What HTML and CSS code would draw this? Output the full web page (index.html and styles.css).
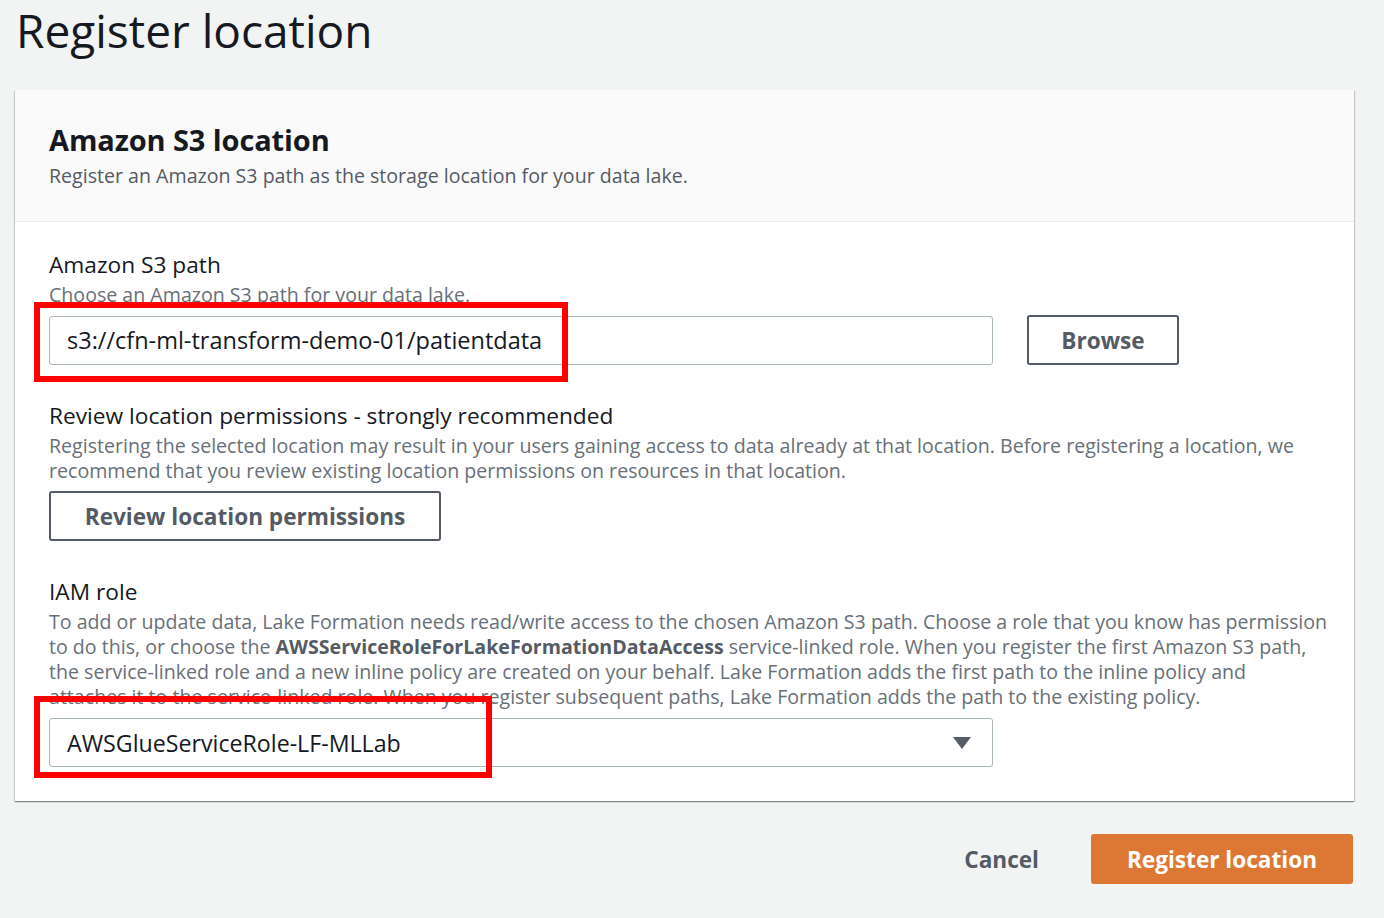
FILE: index.html
```html
<!DOCTYPE html>
<html lang="en">

<head>
  <meta charset="UTF-8" />
  <title>Register location</title>
  <link rel="stylesheet" href="styles.css">
</head>

<body>
  <div class="page">
    <h1>Register location</h1>

    <div class="panel">
      <div class="panel-header">
        <h2>Amazon S3 location</h2>
        <p class="sub">Register an Amazon S3 path as the storage location for your data lake.</p>
      </div>

      <div class="panel-body">
        <div class="field">
          <div class="label">Amazon S3 path</div>
          <div class="desc">Choose an Amazon S3 path for your data lake.</div>
          <div class="row">
            <div class="input marked">
              s3://cfn-ml-transform-demo-01/patientdata
              <span class="mark mark-path"></span>
            </div>
            <button class="btn" id="browse">Browse</button>
          </div>
        </div>

        <div class="field">
          <div class="label">Review location permissions - strongly recommended</div>
          <div class="desc">Registering the selected location may result in your users gaining access to data already at that location. Before registering a location, we<br>recommend that you review existing location permissions on resources in that location.</div>
          <button class="btn" id="review">Review location permissions</button>
        </div>

        <div class="field iam">
          <div class="label">IAM role</div>
          <div class="desc">To add or update data, Lake Formation needs read/write access to the chosen Amazon S3 path. Choose a role that you know has permission<br>to do this, or choose the <b>AWSServiceRoleForLakeFormationDataAccess</b> service-linked role. When you register the first Amazon S3 path,<br>the service-linked role and a new inline policy are created on your behalf. Lake Formation adds the first path to the inline policy and<br>attaches it to the service-linked role. When you register subsequent paths, Lake Formation adds the path to the existing policy.</div>
          <div class="row">
            <div class="input select">
              AWSGlueServiceRole-LF-MLLab
              <svg class="caret" width="18" height="12" viewBox="0 0 18 12"><path d="M0 0h18L9 12z" fill="#545b64"/></svg>
              <span class="mark mark-role"></span>
            </div>
          </div>
        </div>
      </div>
    </div>

    <div class="actions">
      <button class="link-btn">Cancel</button>
      <button class="btn primary">Register location</button>
    </div>
  </div>
</body>

</html>
```

FILE: styles.css
```css
body {
  margin: 0;
  background-color: #f2f3f3;
  font-family: "Open Sans", Arial, sans-serif;
  color: #16191f;
}

.page {
  padding: 0 30px 0 15px;
}

h1 {
  font-size: 46px;
  font-weight: 400;
  margin: 0;
  padding: 0 0 2px 1px;
  line-height: 60px;
}

.panel {
  margin-top: 28px;
  background-color: #fff;
  box-shadow: 0 1px 1px 0 rgba(0, 28, 36, 0.3), 1px 1px 1px 0 rgba(0, 28, 36, 0.15), -1px 1px 1px 0 rgba(0, 28, 36, 0.15);
}

.panel-header {
  background-color: #fafafa;
  border-bottom: 1px solid #eaeded;
  padding: 30px 34px 31px;
}

h2 {
  font-size: 29px;
  font-weight: 700;
  margin: 0;
  line-height: 40px;
  letter-spacing: -0.1px;
}

.sub {
  margin: 2px 0 0;
  font-size: 19.6px;
  line-height: 28px;
  color: #545b64;
}

.panel-body {
  padding: 28px 34px 34px;
}

.field {
  margin-bottom: 36px;
}

.field.iam {
  margin-bottom: 0;
}

.label {
  font-size: 22.7px;
  line-height: 30px;
}

.desc {
  font-size: 19.6px;
  line-height: 25px;
  color: #687078;
  margin-top: 2px;
  white-space: nowrap;
}

.desc b {
  color: #545b64;
}

.row {
  display: flex;
  align-items: center;
  gap: 34px;
  margin-top: 8px;
}

.iam .row {
  margin-top: 9px;
}

.input {
  position: relative;
  box-sizing: border-box;
  width: 944px;
  height: 49px;
  border: 1px solid #aab7b8;
  border-radius: 3px;
  padding: 0 17px;
  display: flex;
  align-items: center;
  font-size: 23.5px;
  background-color: #fff;
}

.select {
  font-size: 23.2px;
}

.caret {
  margin-left: auto;
  margin-right: 4px;
}

/* red annotation boxes drawn over the screenshot */
.mark {
  position: absolute;
  border: 6px solid #ff0000;
  pointer-events: none;
}

.mark-path {
  left: -16px;
  top: -15px;
  width: 522px;
  height: 68px;
}

.mark-role {
  left: -16px;
  top: -23px;
  width: 446px;
  height: 70px;
}

.btn {
  box-sizing: border-box;
  font-family: inherit;
  font-size: 22.6px;
  font-weight: 700;
  color: #545b64;
  background-color: #fff;
  border: 2px solid #545b64;
  border-radius: 3px;
  height: 50px;
  padding: 0 20px;
  cursor: pointer;
}

#browse {
  width: 152px;
}

#review {
  margin-top: 8px;
  width: 392px;
}

.actions {
  display: flex;
  justify-content: flex-end;
  align-items: center;
  gap: 52px;
  margin-top: 33px;
  padding-right: 1px;
}

.link-btn {
  font-family: inherit;
  font-size: 22.6px;
  font-weight: 700;
  color: #545b64;
  background: none;
  border: none;
  padding: 0;
  cursor: pointer;
}

.btn.primary {
  width: 262px;
  background-color: #dd7834;
  border-color: #dd7834;
  color: #fff;
}
```
